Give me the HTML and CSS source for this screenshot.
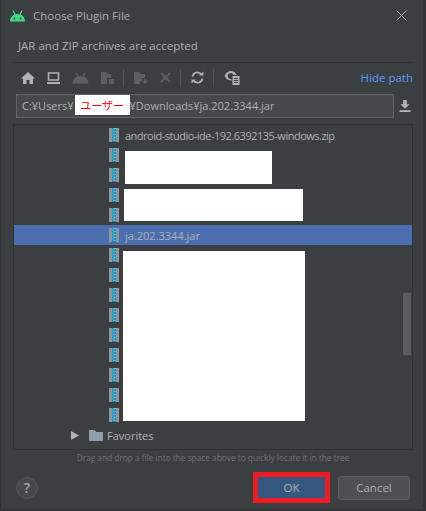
FILE: index.html
```html
<!DOCTYPE html>
<html>
<head>
<meta charset="utf-8">
<title>Choose Plugin File</title>
<link rel="stylesheet" href="styles.css">
</head>
<body>
<svg class="defs" width="0" height="0">
	<symbol id="zip" viewBox="0 0 10 14">
		<rect x="0" y="0" width="10" height="14" fill="#8a979f"/>
		<rect x="3" y="0" width="4" height="14" fill="#2f7f9c"/>
		<path d="M4 0.5h3M3 2h3M4 3.5h3M3 5h3M4 6.5h3M3 8h3M4 9.5h3M3 11h3M4 12.5h3" stroke="#45bfe6" stroke-width="1" fill="none"/>
	</symbol>
</svg>
<div id="dialog">
	<div id="titleBar">
		<svg class="android" width="17" height="13" viewBox="0 0 17 13"><path d="M1 12.5C1 8.5 4 5 8.5 5S16 8.5 16 12.5Z" fill="#3ddc84"/><path d="M4 1.5 6 5.5M13 1.5 11 5.5" stroke="#3ddc84" stroke-width="1.2"/><circle cx="5.5" cy="9.5" r="0.9" fill="#3c3f41"/><circle cx="11.5" cy="9.5" r="0.9" fill="#3c3f41"/></svg>
		<span class="title">Choose Plugin File</span>
		<svg class="close" width="11" height="11" viewBox="0 0 11 11"><path d="M0.5 0.5 10.5 10.5M10.5 0.5 0.5 10.5" stroke="#a8a8a8" stroke-width="1"/></svg>
	</div>
	<div id="description">JAR and ZIP archives are accepted</div>
	<div id="toolbar">
		<svg class="tool" width="14" height="12" viewBox="0 0 14 12"><path d="M7 0 14 6.5H12V12H8.5V8H5.5V12H2V6.5H0Z" fill="#afb1b3"/></svg>
		<svg class="tool" width="13" height="12" viewBox="0 0 13 12"><path d="M1.5 1h10v7h-10Z" fill="none" stroke="#afb1b3" stroke-width="1.6"/><rect x="0" y="10" width="13" height="2" fill="#afb1b3"/></svg>
		<svg class="tool" width="17" height="12" viewBox="0 0 17 12"><path d="M0.5 11.5C0.5 7 4 4 8.5 4S16.500 7 16.500 11.500Z" fill="#5e6060"/><path d="M4 0.500 6 4.500M13 0.500 11 4.500" stroke="#5e6060" stroke-width="1.200"/></svg>
		<svg class="tool" width="13" height="12" viewBox="0 0 13 12"><path d="M0 0H5L6.500 2H10V6H6V12H0Z" fill="#5e6060"/><rect x="8" y="7" width="5" height="5" fill="#5e6060"/></svg>
		<span class="toolSep"></span>
		<svg class="tool" width="14" height="12" viewBox="0 0 14 12"><path d="M0 0H5L6.500 2H11V6H8V9H6V12H0Z" fill="#5e6060"/><path d="M11 7V12M8.500 9.500H13.500" stroke="#5e6060" stroke-width="1.600"/></svg>
		<svg class="tool" width="11" height="11" viewBox="0 0 11 11"><path d="M1 1 10 10M10 1 1 10" stroke="#5e6060" stroke-width="2"/></svg>
		<span class="toolSep"></span>
		<svg class="tool" width="13" height="13" viewBox="0 0 13 13"><path d="M1.500 5.500A5 5 0 0 1 10.500 3.500M11.500 7.500A5 5 0 0 1 2.500 9.500" fill="none" stroke="#afb1b3" stroke-width="1.700"/><path d="M8 4.500H12.500V0.500ZM5 8.500H0.500V12.500Z" fill="#afb1b3"/></svg>
		<span class="toolSep"></span>
		<svg class="tool" width="16" height="15" viewBox="0 0 16 15"><path d="M0.500 6C2 2.500 4.500 1 7 1S11.500 2.500 12.500 5H9.500A3 3 0 1 0 7.500 9V10.500C4.500 10.500 2 9 0.500 6Z" fill="#afb1b3"/><rect x="8.500" y="6" width="7" height="9" fill="#afb1b3"/><path d="M10 8.500h4M10 10.500h4M10 12.500h4" stroke="#3c3f41" stroke-width="1"/></svg>
		<span class="hidePath">Hide path</span>
	</div>
	<div id="pathRow">
		<div class="pathField">C:¥Users¥<span class="redact">ユーザー</span>¥Downloads¥ja.202.3344.jar</div>
		<svg class="download" width="12" height="12" viewBox="0 0 13 13"><path d="M4.500 0H8.500V4.500H11.500L6.500 9.500 1.500 4.500H4.500Z" fill="#afb1b3"/><rect x="0.500" y="11" width="12" height="2" fill="#afb1b3"/></svg>
	</div>
	<div id="tree">
		<div class="row"><svg class="zip"><use href="#zip"/></svg><span class="longName">android-studio-ide-192.6392135-windows.zip</span></div>
		<div class="row"><svg class="zip"><use href="#zip"/></svg></div>
		<div class="row"><svg class="zip"><use href="#zip"/></svg></div>
		<div class="row"><svg class="zip"><use href="#zip"/></svg></div>
		<div class="row"><svg class="zip"><use href="#zip"/></svg></div>
		<div class="row selected"><svg class="zip"><use href="#zip"/></svg><span>ja.202.3344.jar</span></div>
		<div class="row"><svg class="zip"><use href="#zip"/></svg></div>
		<div class="row"><svg class="zip"><use href="#zip"/></svg></div>
		<div class="row"><svg class="zip"><use href="#zip"/></svg></div>
		<div class="row"><svg class="zip"><use href="#zip"/></svg></div>
		<div class="row"><svg class="zip"><use href="#zip"/></svg></div>
		<div class="row"><svg class="zip"><use href="#zip"/></svg></div>
		<div class="row"><svg class="zip"><use href="#zip"/></svg></div>
		<div class="row"><svg class="zip"><use href="#zip"/></svg></div>
		<div class="row"><svg class="zip"><use href="#zip"/></svg></div>
		<div class="row favorites">
			<svg class="arrow" width="8" height="9" viewBox="0 0 8 9"><path d="M0 0 8 4.500 0 9Z" fill="#afb1b3"/></svg>
			<svg class="folder" width="14" height="11" viewBox="0 0 14 11"><path d="M0 0H5.500L7 2H14V11H0Z" fill="#90a0ab"/></svg>
			<span>Favorites</span>
		</div>
		<div class="blank b1"></div>
		<div class="blank b2"></div>
		<div class="blank b3"></div>
		<div class="scrollThumb"></div>
	</div>
	<div id="hint">Drag and drop a file into the space above to quickly locate it in the tree</div>
	<div id="footer">
		<div class="help">?</div>
		<div class="okMark"><button class="btn ok">OK</button></div>
		<button class="btn cancel">Cancel</button>
	</div>
</div>
</body>
</html>
```

FILE: styles.css
```css
html, body {
	margin: 0;
	height: 100%;
	background: #3c3f41;
}
.defs {
	position: absolute;
}
#dialog {
	width: 426px;
	height: 511px;
	box-sizing: border-box;
	padding: 0 10px 0 12px;
	border-left: 1px solid #2f3132;
	border-right: 3px solid #333537;
	border-bottom: 2px solid #333537;
	background: #3c3f41;
	font-family: "Open Sans", "Noto Sans", sans-serif;
	font-size: 11px;
	color: #afb1b3;
	display: flex;
	flex-direction: column;
	overflow: hidden;
}
#titleBar {
	height: 30px;
	display: flex;
	align-items: center;
	margin-left: -4px;
	color: #a9adaf;
}
.title {
	margin-left: 7px;
	font-size: 11.5px;
}
.close {
	margin-left: auto;
	margin-right: 6px;
}
#description {
	height: 33px;
	line-height: 32px;
	margin-left: 0;
	padding-left: 5px;
	font-size: 11.5px;
	color: #a9b0b3;
	border-bottom: 1px solid #2f3132;
	box-sizing: border-box;
}
#toolbar {
	height: 31px;
	box-sizing: border-box;
	padding: 0 0 2px 8px;
	display: flex;
	align-items: center;
	gap: 12px;
}
.toolSep {
	width: 1px;
	height: 18px;
	margin: 0 -2px 0 -3px;
	background: #515355;
}
.hidePath {
	margin-left: auto;
	color: #589df6;
	font-size: 11.5px;
}
#pathRow {
	height: 24px;
	display: flex;
	align-items: center;
	margin-left: 3px;
}
.pathField {
	width: 378px;
	height: 24px;
	line-height: 22px;
	box-sizing: border-box;
	padding-left: 5px;
	background: #45494a;
	border: 1px solid #646464;
	white-space: nowrap;
	overflow: hidden;
	font-size: 11px;
}
.redact {
	display: inline-block;
	box-sizing: border-box;
	width: 55px;
	height: 20px;
	margin-left: 1px;
	line-height: 20px;
	background: #ffffff;
	color: #ff0000;
	text-align: center;
	font-family: "Noto Sans CJK JP", sans-serif;
	font-size: 11px;
	vertical-align: top;
}
.download {
	margin-left: 5px;
}
#tree {
	position: relative;
	margin-top: 6px;
	height: 326px;
	box-sizing: border-box;
	border: 1px solid #2f3132;
	background: #3c3f41;
	overflow: hidden;
}
.row {
	height: 20px;
	display: flex;
	align-items: center;
	padding-left: 95px;
	white-space: nowrap;
}
.row span {
	margin-left: 6px;
}
.row .longName {
	letter-spacing: -0.5px;
}
.zip {
	width: 10px;
	height: 14px;
	flex: none;
}
.selected {
	background: #4b6eaf;
}
.favorites {
	padding-left: 57px;
}
.favorites .folder {
	margin-left: 10px;
}
.favorites span {
	margin-left: 4px;
}
.blank {
	position: absolute;
	background: #ffffff;
}
.b1 {
	left: 111px;
	top: 26px;
	width: 147px;
	height: 33px;
}
.b2 {
	left: 110px;
	top: 64px;
	width: 179px;
	height: 32px;
}
.b3 {
	left: 109px;
	top: 126px;
	width: 182px;
	height: 170px;
}
.scrollThumb {
	position: absolute;
	left: 389px;
	top: 168px;
	width: 8px;
	height: 62px;
	background: #5a5d5e;
}
#hint {
	margin-top: 1px;
	height: 15px;
	line-height: 14px;
	text-align: center;
	font-size: 8.3px;
	color: #6f7274;
}
#footer {
	display: flex;
	align-items: center;
	margin-top: 6px;
	height: 31px;
}
.help {
	width: 22px;
	height: 22px;
	border-radius: 50%;
	box-sizing: border-box;
	border: 1px solid #555859;
	background: #46494b;
	margin-left: 3px;
	text-align: center;
	line-height: 20px;
	font-size: 14px;
	font-weight: 600;
	color: #a6a8a9;
}
.okMark {
	margin-left: auto;
	border: 5px solid #ed1c24;
	box-sizing: border-box;
	width: 77px;
	height: 31px;
}
.btn {
	font-family: "Open Sans", "Noto Sans", sans-serif;
	font-size: 11.5px;
	color: #afb1b3;
	padding: 0;
}
.ok {
	display: block;
	width: 100%;
	height: 100%;
	background: #365880;
	border: 0;
}
.cancel {
	width: 72px;
	height: 24px;
	margin-left: 8px;
	margin-right: 3px;
	background: #4c5052;
	border: 1px solid #5e6060;
	border-radius: 3px;
}
```
